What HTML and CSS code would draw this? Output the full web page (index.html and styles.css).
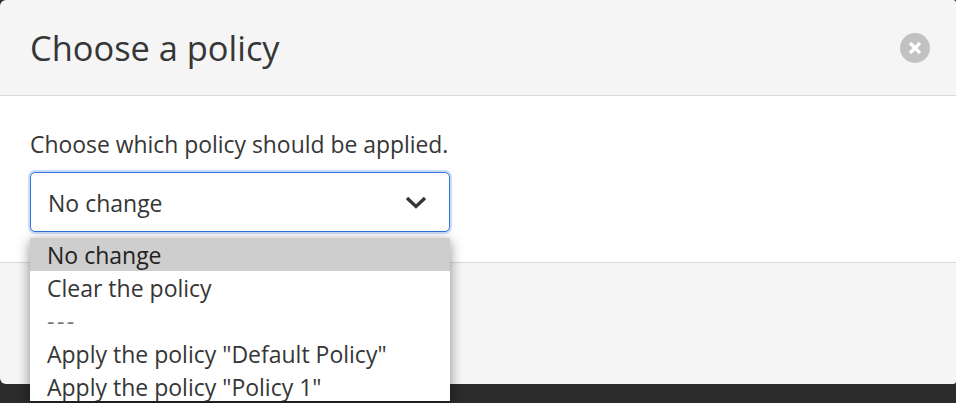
FILE: index.html
```html
<!DOCTYPE html>
<html lang="en">
<head>
    <meta charset="UTF-8">
    <meta name="viewport" content="width=device-width, initial-scale=1.0">
    <title>Choose a policy</title>
    <link rel="stylesheet" href="styles.css">
</head>
<body>
    <div class="modal">
        <header class="modal-head">
            <h1 class="modal-title">Choose a policy</h1>
            <button class="close-btn" aria-label="Close">
                <svg width="14" height="14" viewBox="0 0 14 14"><path d="M2 2 L12 12 M12 2 L2 12" stroke="#fff" stroke-width="3.2" fill="none"/></svg>
            </button>
        </header>
        <section class="modal-body">
            <p class="help">Choose which policy should be applied.</p>
            <div class="select-wrap">
                <div class="select">
                    <span>No change</span>
                    <svg class="chevron" width="22" height="14" viewBox="0 0 22 14"><path d="M2 3 L11 11.5 L20 3" stroke="#363636" stroke-width="3.4" fill="none"/></svg>
                </div>
                <ul class="options">
                    <li class="selected">No change</li>
                    <li>Clear the policy</li>
                    <li class="divider">---</li>
                    <li>Apply the policy "Default Policy"</li>
                    <li>Apply the policy "Policy 1"</li>
                </ul>
            </div>
        </section>
        <footer class="modal-foot"></footer>
    </div>
</body>
</html>
```

FILE: styles.css
```css
html, body {
    margin: 0;
    padding: 0;
    height: 100%;
    overflow: hidden;
}
body {
    background-color: #2b2b2b;
    color: #363636;
    font-family: "Open Sans", "Noto Sans", Arial, sans-serif;
}
.modal {
    height: 384px;
    border-radius: 6px 3px 3px 6px;
    background-color: #f5f5f5;
    display: flex;
    flex-direction: column;
}
.modal-head {
    height: 95px;
    padding: 0 26px 0 30px;
    display: flex;
    align-items: center;
    justify-content: space-between;
    border-bottom: 1px solid #dbdbdb;
}
.modal-title {
    margin: 0;
    font-size: 34.4px;
    font-weight: 400;
    color: #363636;
}
.close-btn {
    width: 30px;
    height: 30px;
    padding: 0;
    border: none;
    border-radius: 50%;
    background-color: #c2c2c2;
    display: flex;
    align-items: center;
    justify-content: center;
}
.modal-body {
    height: 166px;
    background-color: #fff;
    padding: 0 30px;
    border-bottom: 1px solid #dbdbdb;
}
.help {
    margin: 0;
    padding-top: 32px;
    height: 44px;
    font-size: 22.9px;
    line-height: 33px;
    color: #363636;
}
.select-wrap {
    position: relative;
    width: 420px;
}
.select {
    box-sizing: border-box;
    height: 60px;
    padding: 2px 22px 0 17px;
    display: flex;
    align-items: center;
    justify-content: space-between;
    background-color: #fff;
    border: 1px solid #3273dc;
    border-radius: 5px;
    box-shadow: 0 0 0 2px rgba(50, 115, 220, 0.25);
    font-size: 23px;
}
.chevron {
    margin-top: -3px;
}
.options {
    position: absolute;
    top: 66px;
    left: 0;
    width: 100%;
    height: 163px;
    margin: 0;
    padding: 0;
    list-style: none;
    overflow: hidden;
    background-color: #fff;
    box-shadow: 0 3px 12px rgba(0, 0, 0, 0.45);
    font-size: 23px;
}
.options li {
    height: 33px;
    line-height: 35px;
    padding-left: 17px;
}
.options .selected {
    background-color: #cecece;
    color: #222;
}
.options .divider {
    color: #777;
    letter-spacing: 2.5px;
}
.modal-foot {
    flex: 1;
}
```
